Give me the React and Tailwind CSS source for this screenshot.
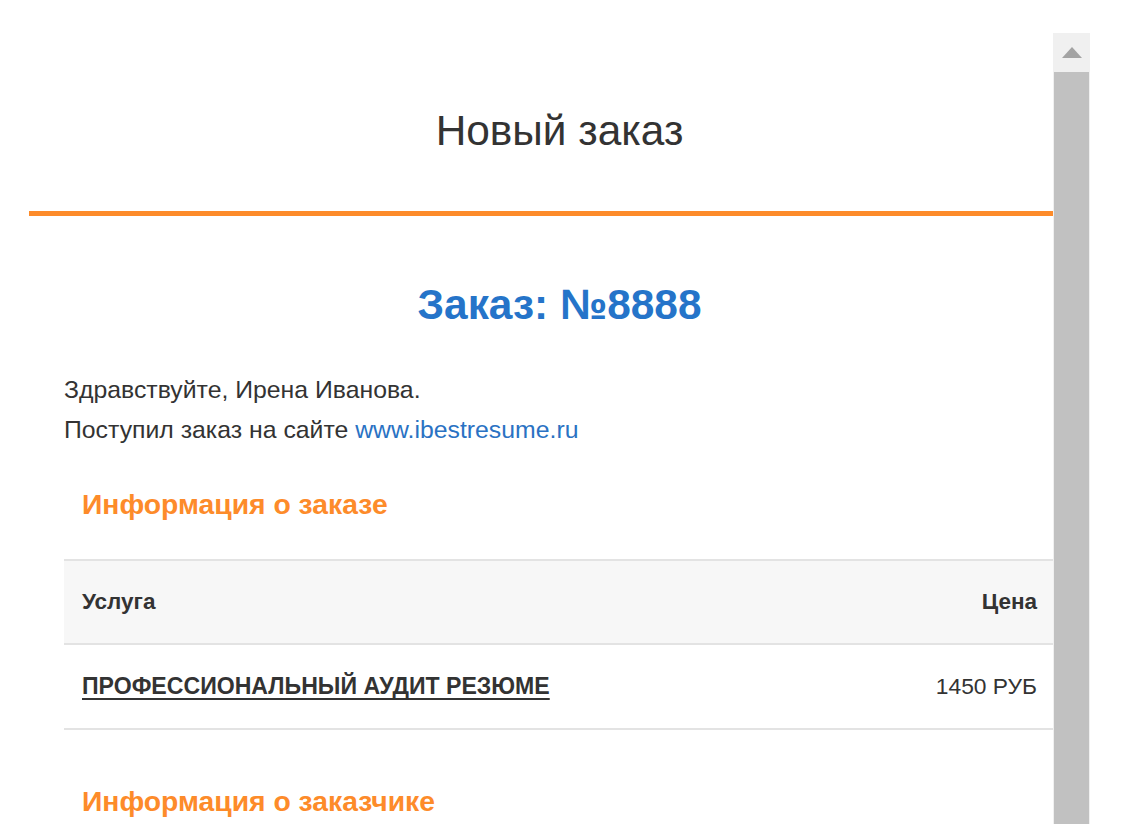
import React from "react";

export default function App() {
  return (
    <div
      className="relative w-[1126px] h-[824px] overflow-hidden bg-white text-[#333333]"
      style={{ fontFamily: '"Liberation Sans", Arial, sans-serif' }}
    >
      <div className="ml-[29px] w-[1061px]">
        <h1 className="pt-[111px] text-center text-[42.4px] leading-[40px] font-normal text-[#333333]">
          Новый заказ
        </h1>
        <div className="mt-[60px] h-[5px] bg-[#fd8b2a]" />
        <div className="px-[35px]">
          <h2 className="mt-[71px] text-center text-[42.4px] leading-[36px] font-bold text-[#2574c9]">
            Заказ: №8888
          </h2>
          <div className="mt-[47px] text-[24.8px] leading-[40px]">
            <p>Здравствуйте, Ирена Иванова.</p>
            <p>
              Поступил заказ на сайте{" "}
              <a className="text-[#2a72c3]">www.ibestresume.ru</a>
            </p>
          </div>
          <h3 className="mt-[39px] ml-[18px] text-[28.3px] leading-[30px] font-bold text-[#fd8b2a]">
            Информация о заказе
          </h3>
          <div className="mt-[40px] border-t-2 border-[#e3e3e3]">
            <div className="flex h-[84px] items-center justify-between bg-[#f7f7f7] px-[18px] text-[22.5px] font-bold border-b-2 border-[#e3e3e3]">
              <span>Услуга</span>
              <span>Цена</span>
            </div>
            <div className="flex h-[85px] items-center justify-between px-[18px] text-[22.8px] border-b-2 border-[#e3e3e3]">
              <a className="text-[23.1px] font-bold underline underline-offset-[4px]">ПРОФЕССИОНАЛЬНЫЙ АУДИТ РЕЗЮМЕ</a>
              <span>1450 РУБ</span>
            </div>
          </div>
          <h3 className="mt-[56px] ml-[18px] text-[28.3px] leading-[30px] font-bold text-[#fd8b2a]">
            Информация о заказчике
          </h3>
        </div>
      </div>

      <div className="absolute left-[1053px] top-[33px] bottom-0 w-[37px] bg-[#f0f0f0] flex flex-col">
        <div className="h-[39px] flex items-center justify-center">
          <svg width="20" height="11" viewBox="0 0 20 11">
            <polygon points="10,0 20,11 0,11" fill="#a3a3a3" />
          </svg>
        </div>
        <div className="flex-1 mx-[1px] bg-[#c1c1c1]" />
      </div>
    </div>
  );
}
